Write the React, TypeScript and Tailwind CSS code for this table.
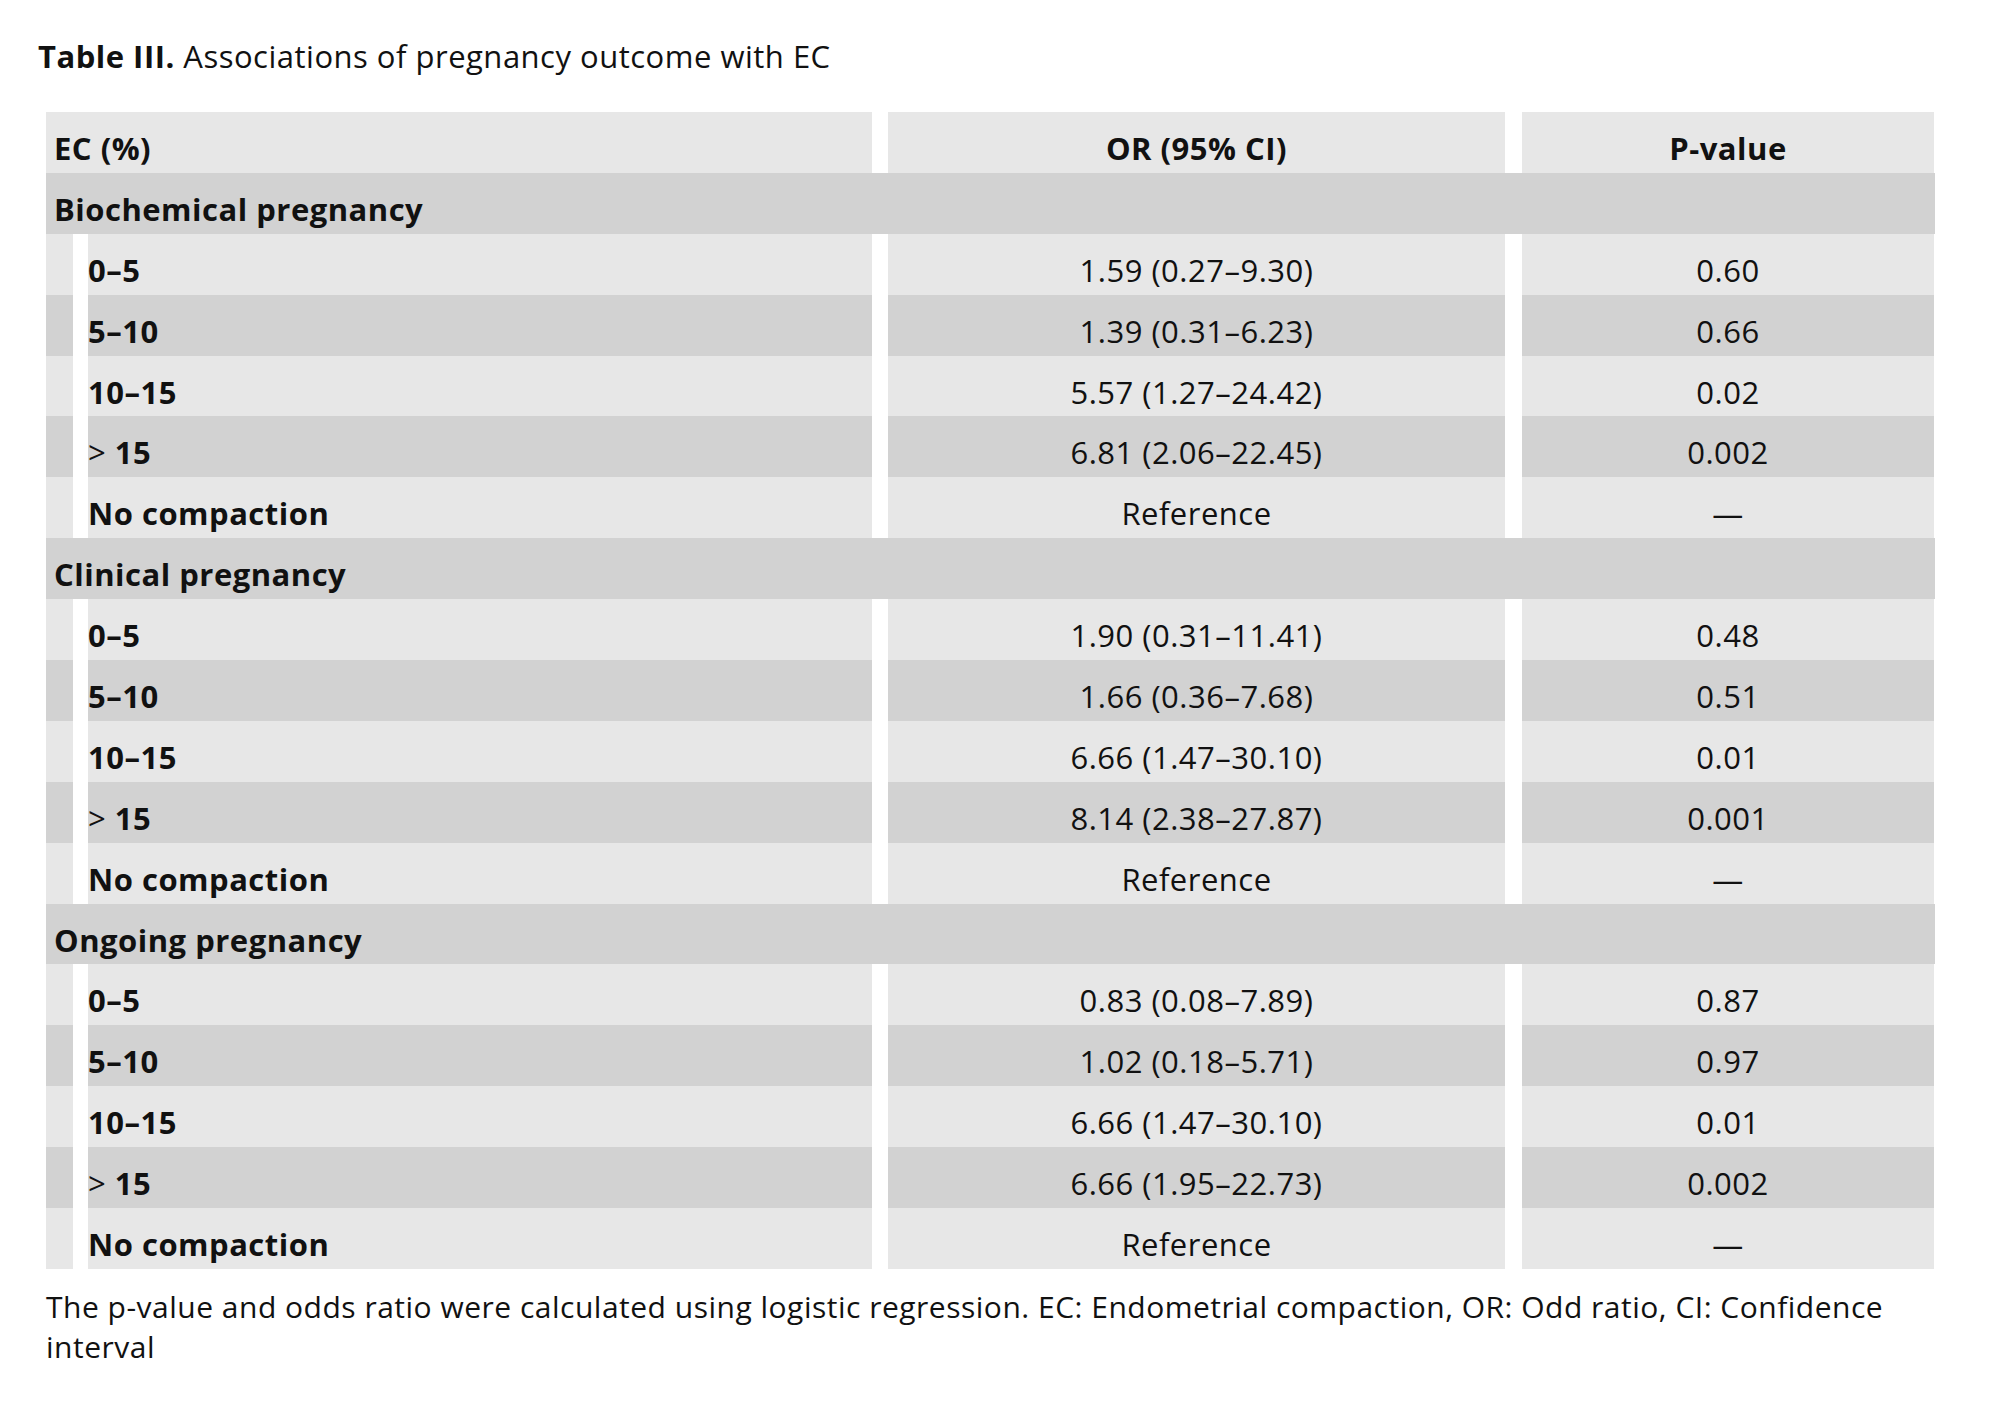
import React from "react";

type Row = [string, string, string];

const sections: { title: string; rows: Row[] }[] = [
  {
    title: "Biochemical pregnancy",
    rows: [
      ["0–5", "1.59 (0.27–9.30)", "0.60"],
      ["5–10", "1.39 (0.31–6.23)", "0.66"],
      ["10–15", "5.57 (1.27–24.42)", "0.02"],
      ["> 15", "6.81 (2.06–22.45)", "0.002"],
      ["No compaction", "Reference", "—"],
    ],
  },
  {
    title: "Clinical pregnancy",
    rows: [
      ["0–5", "1.90 (0.31–11.41)", "0.48"],
      ["5–10", "1.66 (0.36–7.68)", "0.51"],
      ["10–15", "6.66 (1.47–30.10)", "0.01"],
      ["> 15", "8.14 (2.38–27.87)", "0.001"],
      ["No compaction", "Reference", "—"],
    ],
  },
  {
    title: "Ongoing pregnancy",
    rows: [
      ["0–5", "0.83 (0.08–7.89)", "0.87"],
      ["5–10", "1.02 (0.18–5.71)", "0.97"],
      ["10–15", "6.66 (1.47–30.10)", "0.01"],
      ["> 15", "6.66 (1.95–22.73)", "0.002"],
      ["No compaction", "Reference", "—"],
    ],
  },
];

function Label({ text }: { text: string }) {
  // the ">" sign is set in regular weight in the source
  if (text.startsWith(">")) {
    return (
      <span>
        <span className="font-normal">&gt;</span> {text.slice(2)}
      </span>
    );
  }
  return <span>{text}</span>;
}

function DataRow({ row, shade }: { row: Row; shade: string }) {
  return (
    <div className="flex h-[60.9px] bg-white">
      <div className={`w-[27px] ${shade}`} />
      <div className="w-[15px]" />
      <div className={`flex w-[784px] items-center pt-[11px] font-bold ${shade}`}>
        <Label text={row[0]} />
      </div>
      <div className="w-[16px]" />
      <div className={`flex w-[617px] items-center justify-center pt-[11px] ${shade}`}>
        {row[1]}
      </div>
      <div className="w-[17px]" />
      <div className={`flex w-[412px] items-center justify-center pt-[11px] ${shade}`}>
        {row[2]}
      </div>
    </div>
  );
}

export default function App() {
  return (
    <div
      className="min-h-[1404px] bg-white text-[31px] tracking-[0.5px] text-[#111]"
      style={{ fontFamily: "'Open Sans', 'Liberation Sans', sans-serif" }}
    >
      <div className="pt-[38px] pl-[38px] leading-[36px]">
        <span className="font-bold">Table III.</span> Associations of pregnancy
        outcome with EC
      </div>

      <div className="ml-[46px] mt-[38px] w-[1889px] leading-[36px]">
        <div className="flex h-[60.9px] bg-white font-bold">
          <div className="flex w-[826px] items-center bg-[#e7e7e7] pl-[8px] pt-[11px]">
            EC (%)
          </div>
          <div className="w-[16px]" />
          <div className="flex w-[617px] items-center justify-center bg-[#e7e7e7] pt-[11px]">
            OR (95% CI)
          </div>
          <div className="w-[17px]" />
          <div className="flex w-[412px] items-center justify-center bg-[#e7e7e7] pt-[11px]">
            P-value
          </div>
        </div>

        {sections.map((section) => (
          <div key={section.title}>
            <div className="flex h-[60.9px] items-center bg-[#d2d2d2] pl-[8px] pt-[11px] font-bold">
              {section.title}
            </div>
            {section.rows.map((row, i) => (
              <DataRow
                key={row[0]}
                row={row}
                shade={i % 2 === 0 ? "bg-[#e7e7e7]" : "bg-[#d2d2d2]"}
              />
            ))}
          </div>
        ))}
      </div>

      <p className="ml-[46px] mt-[18px] w-[1900px] text-[30px] leading-[40px]">
        The p-value and odds ratio were calculated using logistic regression.
        EC: Endometrial compaction, OR: Odd ratio, CI: Confidence interval
      </p>
    </div>
  );
}
